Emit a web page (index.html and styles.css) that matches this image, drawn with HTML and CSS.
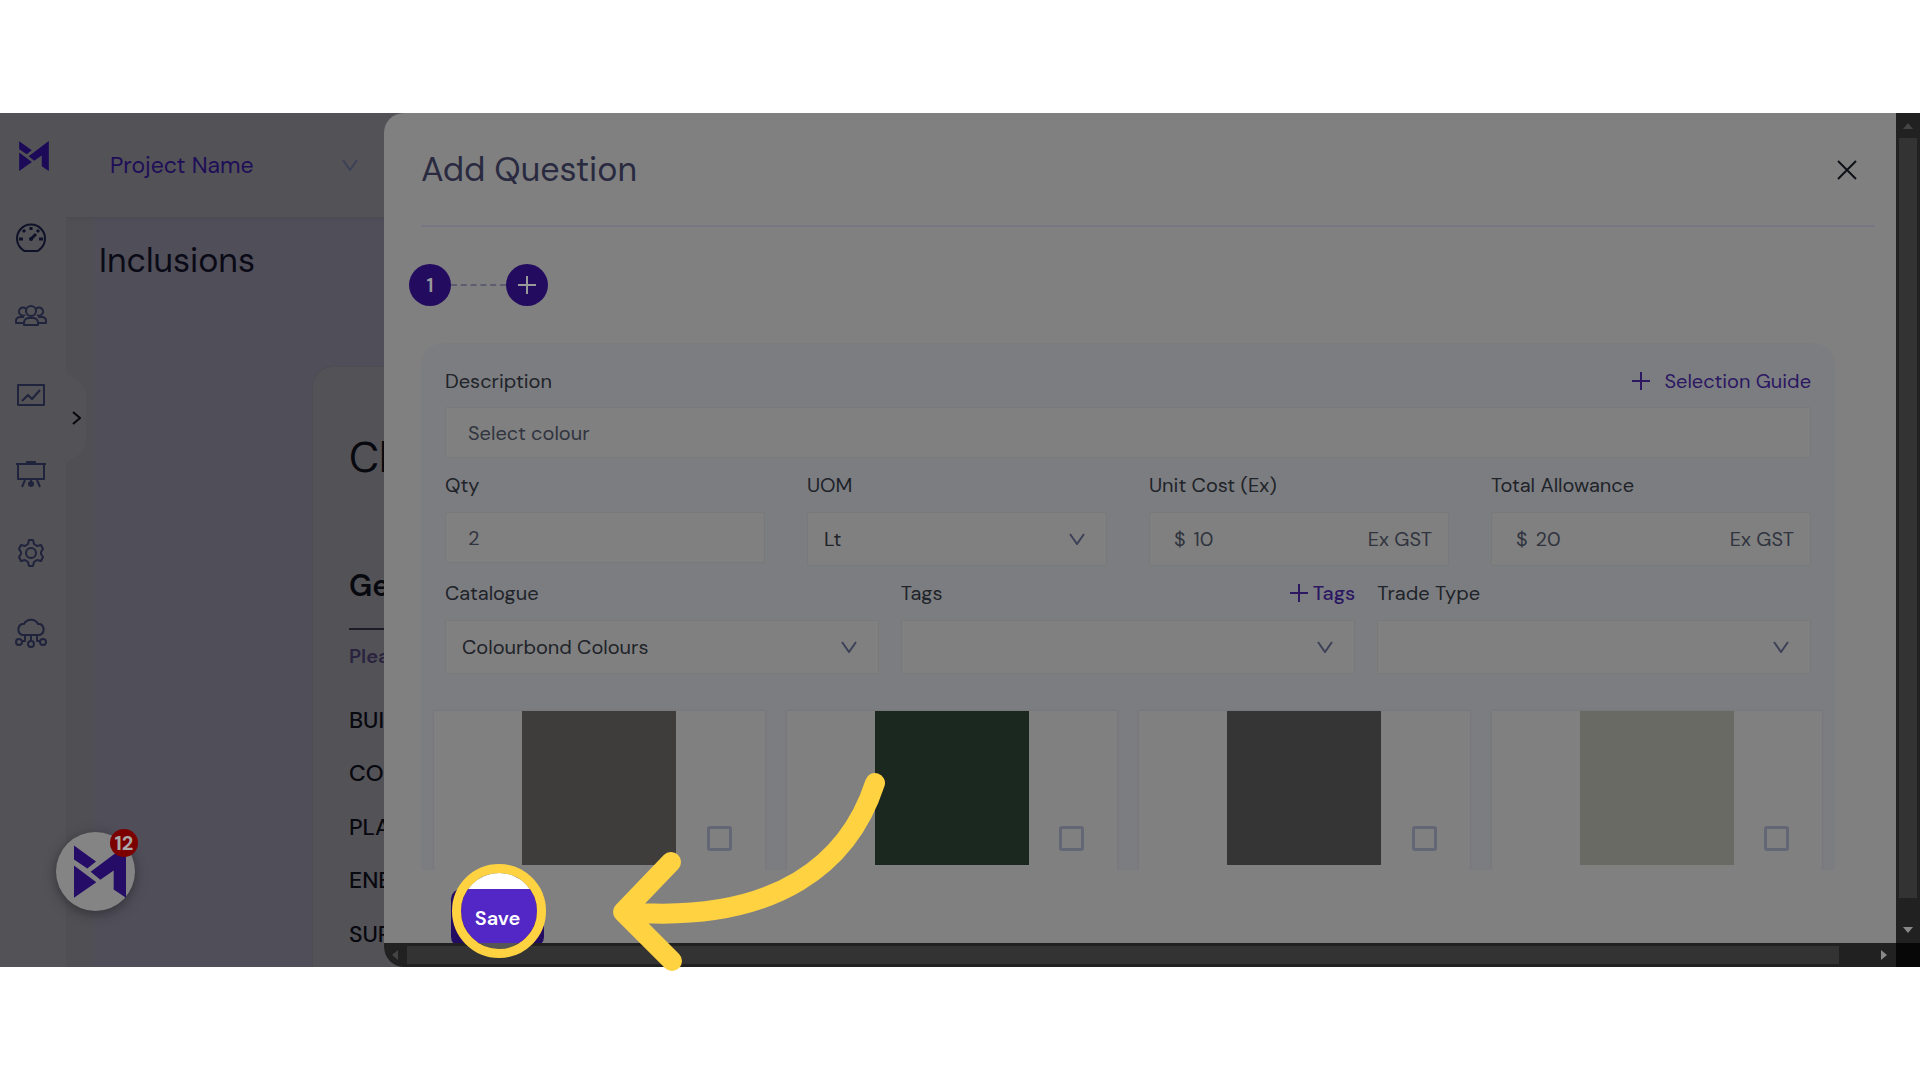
FILE: index.html
```html
<!DOCTYPE html>
<html lang="en">
<head>
<meta charset="utf-8">
<title>Add Question</title>
<link rel="stylesheet" href="styles.css">
</head>
<body>
<svg class="defs" aria-hidden="true">
  <symbol id="logo" viewBox="0 0 156 158"><path d="M0 1 66 49 40 70 0 43ZM0 61 67 111 0 158ZM50 80 156 0V158L119 133V76L79 104Z"/></symbol>
  <symbol id="down" viewBox="0 0 16 12"><path d="M1 1 8 11 15 1"/></symbol>
  <symbol id="plus" viewBox="0 0 18 18"><path d="M9 0V18M0 9H18"/></symbol>
</svg>
<div class="app">
  <nav class="sidebar" aria-label="Main">
    <a class="nav-item first" href="#" aria-label="Home"><svg class="brand"><use href="#logo"/></svg></a>
    <a class="nav-item strong" href="#" aria-label="Dashboard"><svg class="icon" viewBox="0 0 32 32"><path d="M8 29A14 14 0 1 1 24 29Q23 30 22 30H10Q9 30 8 29Z"/><path class="thick" d="M16 6v3M8 9l2 2M4 18h4M24 18h4M22 11l2-2M16 18l5-5"/><circle class="solid" cx="16" cy="18" r="2"/></svg></a>
    <a class="nav-item" href="#" aria-label="People"><svg class="icon" viewBox="0 0 32 32"><circle cx="16" cy="11" r="5"/><path d="M10 15A4 4 0 1 1 11 9M22 15A4 4 0 1 0 21 9M9 25V22Q10 18 14 18H18Q22 18 23 22V25ZM9 23H1V20Q2 17 5 17H9M23 23H31V20Q30 17 27 17H23"/></svg></a>
    <a class="nav-item" href="#" aria-label="Reports"><svg class="icon" viewBox="0 0 32 32"><path d="M3 6H29V26H3ZM7 22 13 16 17 20 25 11"/></svg></a>
    <a class="nav-item" href="#" aria-label="Presentation"><svg class="icon" viewBox="0 0 32 32"><path d="M1 6H31M3 6V21H29V6M12 6V4H20V6M10 22 7 29M22 22 25 29M16 22V25"/><circle class="solid" cx="16" cy="26" r="3"/></svg></a>
    <a class="nav-item" href="#" aria-label="Settings"><svg class="icon" viewBox="0 0 32 32"><circle cx="16" cy="16" r="5"/><path d="M14 3H18L19 7 22 9 26 8 28 12 26 15V17L28 20 26 24 22 23 19 25 18 29H14L13 25 10 23 6 24 4 20 6 17V15L4 12 6 8 10 9 13 7Z"/></svg></a>
    <a class="nav-item" href="#" aria-label="Cloud"><svg class="icon" viewBox="0 0 32 32"><path d="M7 19A6 6 0 0 1 7 8H9A8 8 0 0 1 23 8H25A6 6 0 0 1 25 19ZM16 19V25M10 19V25H7M22 19V25H25"/><circle cx="4" cy="26" r="3"/><circle cx="16" cy="28" r="3"/><circle cx="28" cy="26" r="3"/></svg></a>
    <button class="expand" type="button" aria-label="Expand menu"><svg viewBox="0 0 9 14"><path d="M1 1 8 7 1 13"/></svg></button>
  </nav>

  <main class="page">
    <header class="topbar">
      <button class="project" type="button">Project Name <svg class="chevron"><use href="#down"/></svg></button>
    </header>
    <h1 class="page-title">Inclusions</h1>
    <section class="sheet">
      <h2 class="sheet-title">Cl</h2>
      <h3 class="sheet-sub">Ge</h3>
      <p class="sheet-note">Plea</p>
      <ul class="sheet-list"><li>BUI</li><li>CO</li><li>PLA</li><li>ENE</li><li>SUR</li></ul>
    </section>
  </main>

  <section class="drawer" role="dialog" aria-labelledby="dlg">
    <header class="drawer-head">
      <h2 class="drawer-title" id="dlg">Add Question</h2>
      <button class="close" type="button" aria-label="Close"><svg viewBox="0 0 20 20"><path d="M1 1 19 19M19 1 1 19"/></svg></button>
    </header>
    <div class="drawer-body">
      <div class="steps">
        <button class="step" type="button">1</button>
        <span class="dash"></span>
        <button class="step" type="button" aria-label="Add step"><svg class="plus"><use href="#plus"/></svg></button>
      </div>
      <form class="panel">
        <div class="fields">
          <div class="field">
            <div class="label-row"><label for="desc">Description</label><a class="guide" href="#"><svg class="plus"><use href="#plus"/></svg>Selection Guide</a></div>
            <input class="box pad" id="desc" value="Select colour">
          </div>
          <div class="row four">
            <div class="field"><div class="label-row"><label for="qty">Qty</label></div><input class="box pad" id="qty" value="2"></div>
            <div class="field"><div class="label-row"><label for="uom">UOM</label></div><div class="box tall"><select id="uom"><option>Lt</option></select><svg class="chevron"><use href="#down"/></svg></div></div>
            <div class="field"><div class="label-row"><label for="cost">Unit Cost (Ex)</label></div><div class="box tall money"><span>$</span><input id="cost" value="10"><span>Ex GST</span></div></div>
            <div class="field"><div class="label-row"><label for="total">Total Allowance</label></div><div class="box tall money"><span>$</span><input id="total" value="20"><span>Ex GST</span></div></div>
          </div>
          <div class="row three">
            <div class="field"><div class="label-row"><label for="cat">Catalogue</label></div><div class="box tall"><select id="cat"><option>Colourbond Colours</option></select><svg class="chevron"><use href="#down"/></svg></div></div>
            <div class="field"><div class="label-row"><label for="tags">Tags</label><a class="add-tags" href="#"><svg class="plus"><use href="#plus"/></svg>Tags</a></div><div class="box tall"><select id="tags"><option></option></select><svg class="chevron"><use href="#down"/></svg></div></div>
            <div class="field"><div class="label-row"><label for="trade">Trade Type</label></div><div class="box tall"><select id="trade"><option></option></select><svg class="chevron"><use href="#down"/></svg></div></div>
          </div>
        </div>
        <div class="cards">
          <div class="card"><div class="swatch grey"></div><input class="tick" type="checkbox" aria-label="Warm grey"></div>
          <div class="card"><div class="swatch green"></div><input class="tick" type="checkbox" aria-label="Green"></div>
          <div class="card"><div class="swatch slate"></div><input class="tick" type="checkbox" aria-label="Dark grey"></div>
          <div class="card"><div class="swatch stone"></div><input class="tick" type="checkbox" aria-label="Stone"></div>
        </div>
      </form>
    </div>
    <footer class="drawer-foot">
      <button class="save" type="button"><span class="spotlight"></span><span class="save-text">Save</span></button>
    </footer>
    <div class="hbar"><i class="tri left"></i><i class="thumb"></i><i class="tri right"></i></div>
  </section>

  <div class="vbar"><i class="tri up"></i><i class="thumb"></i><i class="tri down"></i><i class="corner"></i></div>

  <button class="chat" type="button" aria-label="Notifications"><svg><use href="#logo"/></svg><span class="badge">12</span></button>
  <svg class="arrow" viewBox="612 772 274 200" aria-hidden="true"><path d="M875 783C850 860 780 925 624 912M671 862 623 912 672 961"/></svg>
</div>
</body>
</html>
```
FILE: styles.css
```css
* { box-sizing: border-box; }
body {
  margin: 0;
  height: 100vh;
  padding: 113px 0;
  background: #fff;
  font: 400 20px/24px "DM Sans", Inter, "Liberation Sans", sans-serif;
  color: #202329;
  overflow: hidden;
}
h1, h2, h3, p, ul { margin: 0; padding: 0; font-weight: 400; }
ul { list-style: none; }
a { color: inherit; text-decoration: none; }
button, input, select { font: inherit; color: inherit; margin: 0; padding: 0; border: 0; background: none; outline: 0; }
svg { display: block; fill: none; stroke: currentColor; }
.defs { position: absolute; width: 0; height: 0; }

.app {
  position: relative;
  height: 100%;
  display: grid;
  grid-template-columns: 66px 338px minmax(0, 1fr) 24px;
  grid-template-rows: minmax(0, 1fr);
  background: #504e58;
}

/* Sidebar */
.sidebar {
  position: relative;
  z-index: 1;
  display: flex;
  flex-direction: column;
  background: #535257;
  color: #20233c;
}
.nav-item { height: 79px; padding-right: 4px; display: grid; place-items: center; }
.nav-item.first { height: 84px; padding-top: 2px; }
.nav-item.strong { color: #0f1128; }
.icon { width: 32px; height: 32px; stroke-width: 2; stroke-linejoin: round; }
.thick { stroke-width: 3; }
.solid { fill: currentColor; stroke: none; }
.brand { width: 30px; height: 30px; fill: #1c0a58; stroke: none; margin-left: 6px; }
.expand {
  position: absolute;
  left: 66px;
  top: 260px;
  width: 20px;
  height: 90px;
  display: grid;
  place-items: center;
  background: #535257;
  clip-path: polygon(0 0, 70% 10%, 100% 20%, 100% 80%, 70% 90%, 0 100%);
  color: #08080c;
}
.expand svg { width: 9px; height: 14px; stroke-width: 2; }

/* Page under the drawer */
.page { overflow: hidden; display: flex; flex-direction: column; background: linear-gradient(90deg, #504f53 22px, #504e58 30px); }
.topbar { background: #535257; height: 104px; padding: 0 44px; display: flex; box-shadow: 0 1px 4px #4b4a50; }
.project { flex: 1; display: flex; align-items: center; justify-content: space-between; font-size: 23px; color: #1e0e58; padding-right: 2px; }
.chevron { width: 16px; height: 12px; stroke-width: 2; color: #3d4157; flex: none; }
.page-title { font-size: 34px; line-height: 40px; padding: 24px 33px; color: #0a0a16; }
.sheet { flex: 1; margin: 62px 0 0 247px; padding: 66px 0 0 36px; background: #535257; border-radius: 20px 0 0 0; box-shadow: 0 0 2px #4a4850; white-space: nowrap; color: #08080f; }
.sheet-title { font-size: 42px; line-height: 50px; }
.sheet-sub { font-size: 30px; line-height: 40px; font-weight: 600; margin-top: 83px; padding-bottom: 22px; border-bottom: 2px solid #1c1c26; }
.sheet-note { font-weight: 600; color: #29233f; margin: 14px 0 25px; }
.sheet-list { font-size: 23px; font-weight: 500; line-height: 54px; }
.sheet-list li { height: 53px; }
.sheet-list li:nth-child(even) { height: 54px; }

/* Drawer */
.drawer { position: relative; z-index: 1; margin-left: -20px; background: #808080; border-radius: 20px 0 0 20px; display: flex; flex-direction: column; }
.drawer-head { margin: 0 21px 0 37px; height: 114px; flex: none; padding: 2px 18px 0 0; display: flex; align-items: center; justify-content: space-between; border-bottom: 2px solid #777781; }
.drawer-title { font-size: 34px; line-height: 40px; color: #292a40; }
.close { width: 20px; height: 20px; color: #0d1117; }
.close svg { width: 20px; height: 20px; stroke-width: 2; }
.drawer-body { flex: 1; min-height: 0; overflow: hidden; padding: 37px 61px 0 25px; }
.steps { display: flex; align-items: center; margin-bottom: 37px; }
.step { width: 42px; height: 42px; border-radius: 50%; background: #230b60; color: #999; font-weight: 600; display: grid; place-items: center; }
.dash { width: 55px; border-top: 2px dashed #5c5d6e; }
.plus { width: 18px; height: 18px; stroke-width: 2; }
.panel { margin-left: 12px; padding: 20px 13px 0; background: #7c7d80; border-radius: 22px 22px 0 0; }
.fields { padding: 0 11px; display: flex; flex-direction: column; }
.field { min-width: 0; }
.label-row { height: 44px; padding-top: 6px; display: flex; align-items: flex-start; justify-content: space-between; }
.row .label-row { height: 54px; padding-top: 15px; }
.guide, .add-tags { display: flex; align-items: center; gap: 14px; color: #2b1762; }
.add-tags { gap: 5px; font-weight: 500; }
.row { display: grid; }
.four { grid-template-columns: 320fr 300fr 300fr 320fr; gap: 42px; }
.three { grid-template-columns: 434fr 455fr 434fr; gap: 22px; }
.box { display: flex; align-items: center; width: 100%; height: 51px; background: #808080; border: 1px solid #787979; border-radius: 2px; color: #30343f; }
.box.pad { padding: 0 22px; }
.box.tall { height: 54px; padding: 0 21px 0 16px; }
.box select { flex: 1; min-width: 0; height: 100%; appearance: none; color: #202329; }
.box.tall.money { padding: 0 16px 0 24px; gap: 8px; }
.money input { flex: 1; min-width: 0; }
.cards { display: grid; grid-template-columns: repeat(4, 1fr); gap: 22px; margin-top: 37px; }
.card { height: 200px; position: relative; background: #808080; box-shadow: 0 0 2px #6c6d75; }
.swatch { width: 154px; height: 154px; margin: 0 auto; }
.grey { background: #3f3d3b; }
.green { background: #1a281f; }
.slate { background: #353535; }
.stone { background: #696a64; }
.tick { position: absolute; right: 33px; top: 115px; width: 25px; height: 25px; appearance: none; border: 3px solid #636675; border-radius: 3px; }
.drawer-foot { flex: none; height: 73px; padding: 19px 67px 0; }
.save { position: relative; width: 93px; height: 58px; border-radius: 10px; background: #240b62; color: #fff; font-weight: 600; }
.save-text { position: relative; z-index: 3; }
.spotlight {
  position: absolute;
  z-index: 2;
  left: 1px;
  top: -25px;
  width: 94px;
  height: 94px;
  border: 9px solid #ffd242;
  border-radius: 50%;
  background: linear-gradient(#fff 16px, #5227c5 16px 70px, #555 70px) padding-box;
}

/* Scroll bars */
.hbar { position: relative; z-index: 1; flex: none; height: 24px; display: flex; align-items: center; padding: 0 9px 0 8px; background: #212121; border-radius: 0 0 0 20px; }
.hbar .thumb { flex: 1; height: 18px; margin: 0 42px 0 9px; background: #333; }
.vbar { display: flex; flex-direction: column; align-items: center; background: #212121; }
.vbar .thumb { flex: 1; width: 18px; margin: 9px 0 29px; background: #333; }
.corner { width: 24px; height: 24px; margin-top: 10px; background: #070707; }
.tri { width: 0; height: 0; border: 5px solid transparent; }
.tri.left { border-right: 6px solid #444; border-left: 0; }
.tri.right { border-left: 6px solid #888; border-right: 0; }
.tri.up { border-bottom: 6px solid #444; border-top: 0; margin-top: 10px; }
.tri.down { border-top: 6px solid #888; border-bottom: 0; }

/* Floating items */
.chat { position: absolute; z-index: 2; left: 56px; bottom: 56px; width: 79px; height: 79px; border-radius: 50%; background: #848484; box-shadow: 0 3px 12px #333238; display: grid; place-items: center; }
.chat svg { width: 52px; height: 53px; margin-left: 8px; fill: #250c66; stroke: none; }
.badge { position: absolute; right: -3px; top: -3px; width: 28px; height: 28px; border-radius: 50%; background: #7d0000; color: #aaa; line-height: 28px; font-weight: 700; }
.arrow { position: absolute; z-index: 4; left: 612px; bottom: -5px; width: 274px; height: 200px; stroke: #ffd242; stroke-width: 20; stroke-linecap: round; stroke-linejoin: round; }
```
